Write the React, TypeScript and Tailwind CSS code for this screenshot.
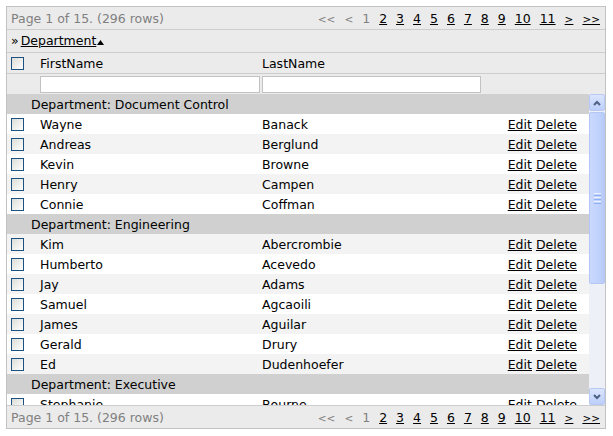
import React from "react";

type Row = { first: string; last: string };
type Group = { name: string; rows: Row[] };

const groups: Group[] = [
  {
    name: "Document Control",
    rows: [
      { first: "Wayne", last: "Banack" },
      { first: "Andreas", last: "Berglund" },
      { first: "Kevin", last: "Browne" },
      { first: "Henry", last: "Campen" },
      { first: "Connie", last: "Coffman" },
    ],
  },
  {
    name: "Engineering",
    rows: [
      { first: "Kim", last: "Abercrombie" },
      { first: "Humberto", last: "Acevedo" },
      { first: "Jay", last: "Adams" },
      { first: "Samuel", last: "Agcaoili" },
      { first: "James", last: "Aguilar" },
      { first: "Gerald", last: "Drury" },
      { first: "Ed", last: "Dudenhoefer" },
    ],
  },
  {
    name: "Executive",
    rows: [
      { first: "Stephanie", last: "Bourne" },
      { first: "David", last: "Bradley" },
    ],
  },
];

function Check() {
  return (
    <span className="block w-[13px] h-[13px] border border-[#1c5180] bg-linear-to-br from-[#dcdcd7] to-white" />
  );
}

function Pager() {
  const nums = ["2", "3", "4", "5", "6", "7", "8", "9", "10", "11"];
  return (
    <div className="h-[22px] pt-[2px] flex items-center justify-between pl-[4px] pr-[5px] bg-[#ebebeb]">
      <span className="text-[#808080]">Page 1 of 15. (296 rows)</span>
      <div className="flex items-center gap-[9px]">
        <span className="text-[#808080] text-[10.5px]">&lt;&lt;</span>
        <span className="text-[#808080] text-[10.5px]">&lt;</span>
        <span className="text-[#808080]">1</span>
        {nums.map((n) => (
          <a key={n} className="underline text-black cursor-pointer">
            {n}
          </a>
        ))}
        <a className="underline text-black cursor-pointer text-[10.5px]">&gt;</a>
        <a className="underline text-black cursor-pointer text-[10.5px]">&gt;&gt;</a>
      </div>
    </div>
  );
}

function Chevron({ up }: { up: boolean }) {
  return (
    <svg width="8" height="6" viewBox="0 0 8 6">
      <path
        d={up ? "M1 5 L4 2 L7 5" : "M1 1 L4 4 L7 1"}
        fill="none"
        stroke="#4d6185"
        strokeWidth="2"
      />
    </svg>
  );
}

function Scrollbar() {
  return (
    <div className="w-[16px] flex flex-col bg-[#eef0f8] shrink-0">
      <div className="h-[17px] flex items-center justify-center rounded-[2px] border border-[#b7c9f4] bg-linear-to-b from-[#dbe5fd] to-[#bccffb]">
        <Chevron up />
      </div>
      <div className="mt-[1px] h-[172px] rounded-[2px] border border-[#b3c6f4] bg-linear-to-r from-[#c9d8fd] via-[#c2d3fc] to-[#b7cbfa] flex items-center justify-center">
        <div className="flex flex-col gap-[1px]">
          <span className="block w-[7px] h-[1px] bg-[#eef3fe]" />
          <span className="block w-[7px] h-[1px] bg-[#8eb0f5]" />
          <span className="block w-[7px] h-[1px] bg-[#eef3fe]" />
          <span className="block w-[7px] h-[1px] bg-[#8eb0f5]" />
          <span className="block w-[7px] h-[1px] bg-[#eef3fe]" />
          <span className="block w-[7px] h-[1px] bg-[#8eb0f5]" />
        </div>
      </div>
      <div className="flex-1" />
      <div className="h-[17px] flex items-center justify-center rounded-[2px] border border-[#b7c9f4] bg-linear-to-b from-[#dbe5fd] to-[#bccffb]">
        <Chevron up={false} />
      </div>
    </div>
  );
}

export default function App() {
  let idx = 0;
  return (
    <div className="w-[613px] h-[436px] bg-white pt-[6px] pl-[6px] font-['DejaVu_Sans','Verdana',sans-serif] text-[12.5px] text-black leading-none">
      <div className="w-[600px] border border-[#c2c2c2] flex flex-col">
        <Pager />
        <div className="border-t border-[#cdcdcd] h-[23px] flex items-center pl-[4px] bg-[#ebebeb]">
          <span className="mr-[2px]">»</span>
          <a className="underline cursor-pointer">Department</a>
          <svg width="7" height="5" viewBox="0 0 7 5" className="ml-[1px] mt-[3px]">
            <path d="M0 5 L3.5 0 L7 5 Z" fill="#000" />
          </svg>
        </div>
        <div className="border-t border-[#cdcdcd] h-[21px] pt-[2px] grid grid-cols-[33px_222px_1fr] items-center bg-[#ebebeb]">
          <div className="pl-[4px] -mt-[2px]">
            <Check />
          </div>
          <div>FirstName</div>
          <div>LastName</div>
        </div>
        <div className="border-t border-[#cdcdcd] h-[21px] grid grid-cols-[33px_222px_219px_1fr] items-center bg-[#ebebeb]">
          <div />
          <div className="pr-[2px]">
            <div className="h-[17px] border border-[#c2c2c2] bg-white" />
          </div>
          <div>
            <div className="h-[17px] border border-[#c2c2c2] bg-white" />
          </div>
          <div />
        </div>
        <div className="h-[311px] flex">
          <div className="flex-1 overflow-hidden">
            {groups.map((g) => (
              <React.Fragment key={g.name}>
                <div className="h-[20px] pt-[2px] flex items-center pl-[24px] bg-[#d0d0d0]">
                  Department: {g.name}
                </div>
                {g.rows.map((r) => {
                  const alt = idx++ % 2 === 1;
                  return (
                    <div
                      key={r.first}
                      className={`h-[20px] grid grid-cols-[33px_222px_1fr_auto] items-center ${
                        alt ? "bg-[#f3f3f3]" : "bg-white"
                      }`}
                    >
                      <div className="pl-[4px]">
                        <Check />
                      </div>
                      <div className="pt-[2px]">{r.first}</div>
                      <div className="pt-[2px]">{r.last}</div>
                      <div className="pt-[2px] pr-[12px] flex gap-[4px]">
                        <a className="underline cursor-pointer">Edit</a>
                        <a className="underline cursor-pointer">Delete</a>
                      </div>
                    </div>
                  );
                })}
              </React.Fragment>
            ))}
          </div>
          <Scrollbar />
        </div>
        <div className="border-t border-[#cdcdcd]">
          <Pager />
        </div>
      </div>
    </div>
  );
}
